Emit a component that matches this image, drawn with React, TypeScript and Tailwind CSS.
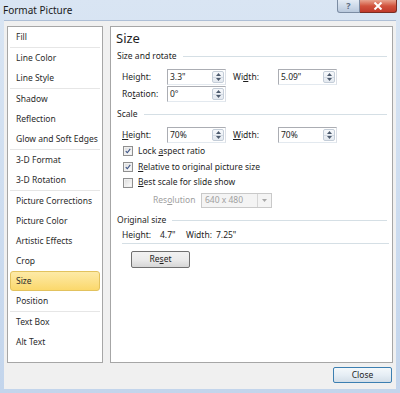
import type { ReactNode } from "react";

const GROUPS: string[][] = [
  ["Fill"],
  ["Line Color", "Line Style"],
  ["Shadow", "Reflection", "Glow and Soft Edges"],
  ["3-D Format", "3-D Rotation"],
  ["Picture Corrections", "Picture Color", "Artistic Effects", "Crop", "Size", "Position"],
  ["Text Box", "Alt Text"],
];

function SectionHeader({ children, className = "" }: { children: ReactNode; className?: string }) {
  return (
    <div className={`flex items-center h-[13px] pl-[6px] pr-[5px] ${className}`}>
      <span className="text-[#1e1e1e] whitespace-nowrap">{children}</span>
      <div className="flex-1 ml-[6px] border-t border-[#d5dfe5]" />
    </div>
  );
}

function Spin({ value }: { value: string }) {
  return (
    <div className="w-[59px] h-[16px] border border-[#abadb3] border-b-[#e3e9ef] border-r-[#dbdfe6] bg-white flex items-center">
      <span className="flex-1 pl-[2px] text-[#1e1e1e]">{value}</span>
      <div className="w-[12px] h-[12px] mr-[1px] flex flex-col rounded-[2px] border border-[#c4cdd8] bg-gradient-to-b from-[#f6f8fb] to-[#e4e9f0]">
        <div className="flex-1 flex items-center justify-center border-b border-[#d3dae3]">
          <svg width="5" height="3" viewBox="0 0 5 3">
            <path d="M0 3 L2.5 0 L5 3 Z" fill="#4d5b6e" />
          </svg>
        </div>
        <div className="flex-1 flex items-center justify-center">
          <svg width="5" height="3" viewBox="0 0 5 3">
            <path d="M0 0 L2.5 3 L5 0 Z" fill="#4d5b6e" />
          </svg>
        </div>
      </div>
    </div>
  );
}

function Check({ checked }: { checked: boolean }) {
  return (
    <div className="w-[10px] h-[10px] border border-[#8f8f8f] bg-white flex items-center justify-center">
      <div className="w-[8px] h-[8px] border border-[#f0f0f0] bg-gradient-to-br from-[#dedede] to-[#fbfbfb] flex items-center justify-center">
        {checked ? (
          <svg width="8" height="8" viewBox="0 0 8 8" className="-mt-[1px]">
            <path d="M1 4.2 L3.1 6.3 L7 1.2" stroke="#3b5385" strokeWidth="1.5" fill="none" />
          </svg>
        ) : null}
      </div>
    </div>
  );
}

export default function App() {
  return (
    <div className="w-[400px] h-[393px] flex flex-col bg-gradient-to-b from-[#d9e5f3] to-[#c3d5ec] font-['Noto_Sans',sans-serif] text-[8.5px] text-[#1e1e1e] overflow-hidden">
      {/* title bar */}
      <div className="h-[20px] flex items-start relative">
        <span className="pl-[3px] pt-[3px] text-[10px] text-[#1a1a1a]">Format Picture</span>
        <div className="ml-auto flex mr-[3px]">
          <div className="w-[23px] h-[13px] rounded-bl-[3px] border border-[#7b8ca3] border-t-0 bg-gradient-to-b from-[#e4ecf5] to-[#b9c9dd] flex items-center justify-center text-[9px] font-bold text-[#5b6b80]">
            ?
          </div>
          <div className="w-[37px] h-[13px] rounded-br-[3px] border border-[#7a2c22] border-t-0 border-l-0 bg-gradient-to-b from-[#e7a38f] via-[#d1523d] to-[#c0392b] flex items-center justify-center">
            <svg width="10" height="8" viewBox="0 0 10 8">
              <path d="M1.5 0.5 L8.5 7.5 M8.5 0.5 L1.5 7.5" stroke="#ffffff" strokeWidth="2" />
            </svg>
          </div>
        </div>
      </div>

      {/* client */}
      <div className="flex-1 mx-[4px] mb-[4px] bg-[#f0f0f0] border-t border-[#aebfd6] flex flex-col pt-[5px] px-[3px]">
        <div className="flex gap-[7px] h-[337px]">
          {/* category list */}
          <div className="w-[96px] h-full bg-white border border-[#a6a6a6] flex flex-col">
            {GROUPS.map((group, gi) => (
              <div key={gi} className={gi > 0 ? "border-t border-[#e6e6e6] mx-[2px]" : "mx-[2px]"}>
                {group.map((item) => (
                  <div
                    key={item}
                    className={`h-[20px] flex items-center pl-[5px] text-[#2b2b2b] ${
                      item === "Size"
                        ? "rounded-[3px] border border-[#e2c25e] bg-gradient-to-b from-[#fdeaa6] to-[#fbd86b]"
                        : "border border-transparent"
                    }`}
                  >
                    {item}
                  </div>
                ))}
              </div>
            ))}
          </div>

          {/* size page */}
          <div className="flex-1 h-full bg-white border border-[#a6a6a6] flex flex-col">
            <div className="mt-[3px] h-[17px] pl-[5px] text-[13px] leading-[17px] text-[#1e1e1e]">Size</div>

            <SectionHeader className="mt-[3px]">Size and rotate</SectionHeader>

            <div className="mt-[6px] h-[16px] flex items-center pl-[11px]">
              <span className="w-[45px]">
                Hei<u>g</u>ht:
              </span>
              <Spin value={'3.3"'} />
              <span className="w-[45px] ml-[7px]">
                Wi<u>d</u>th:
              </span>
              <Spin value={'5.09"'} />
            </div>
            <div className="mt-[1px] h-[16px] flex items-center pl-[11px]">
              <span className="w-[45px]">
                Ro<u>t</u>ation:
              </span>
              <Spin value="0°" />
            </div>

            <SectionHeader className="mt-[6px]">Scale</SectionHeader>

            <div className="mt-[6px] h-[16px] flex items-center pl-[11px]">
              <span className="w-[45px]">
                <u>H</u>eight:
              </span>
              <Spin value="70%" />
              <span className="w-[45px] ml-[7px]">
                <u>W</u>idth:
              </span>
              <Spin value="70%" />
            </div>

            <div className="mt-[1px] h-[14px] flex items-center pl-[12px] gap-[5px]">
              <Check checked />
              <span>
                Lock <u>a</u>spect ratio
              </span>
            </div>
            <div className="mt-[2px] h-[14px] flex items-center pl-[12px] gap-[5px]">
              <Check checked />
              <span>
                <u>R</u>elative to original picture size
              </span>
            </div>
            <div className="mt-[1.5px] h-[14px] flex items-center pl-[12px] gap-[5px]">
              <Check checked={false} />
              <span>
                <u>B</u>est scale for slide show
              </span>
            </div>

            <div className="mt-[3px] h-[15px] flex items-center pl-[42px]">
              <span className="w-[48px] text-[#a0a0a0]">
                Res<u>o</u>lution
              </span>
              <div className="w-[71px] h-[15px] border border-[#c9c9c9] bg-[#f4f4f4] flex items-center">
                <span className="flex-1 pl-[3px] text-[#a0a0a0]">640 x 480</span>
                <div className="w-[14px] h-full border-l border-[#d6d6d6] flex items-center justify-center">
                  <svg width="5" height="3" viewBox="0 0 5 3">
                    <path d="M0 0 L2.5 3 L5 0 Z" fill="#a8a8a8" />
                  </svg>
                </div>
              </div>
            </div>

            <SectionHeader className="mt-[6px]">Original size</SectionHeader>

            <div className="mt-[2px] h-[13px] flex items-center pl-[11px] whitespace-nowrap">
              <span className="w-[38px]">Height:</span>
              <span className="w-[26px]">4.7"</span>
              <span className="w-[30px]">Width:</span>
              <span>7.25"</span>
            </div>
            <div className="mt-[1.5px] ml-[11px] mr-[3px] border-t border-[#d5dfe5]" />

            <div className="mt-[7px] pl-[20px]">
              <div className="w-[59px] h-[17px] rounded-[2px] border border-[#707070] bg-gradient-to-b from-[#f2f2f2] via-[#ebebeb] to-[#d6d6d6] flex items-center justify-center text-[#1e1e1e]">
                <span>
                  Re<u>s</u>et
                </span>
              </div>
            </div>
          </div>
        </div>

        <div className="flex justify-end mt-[4px] pr-[1px]">
          <div className="w-[59px] h-[16px] rounded-[2px] border border-[#3c7fb1] bg-gradient-to-b from-[#f4f8fb] via-[#e6eef5] to-[#d3dee8] flex items-center justify-center text-[#1e1e1e]">
            Close
          </div>
        </div>
      </div>
    </div>
  );
}
